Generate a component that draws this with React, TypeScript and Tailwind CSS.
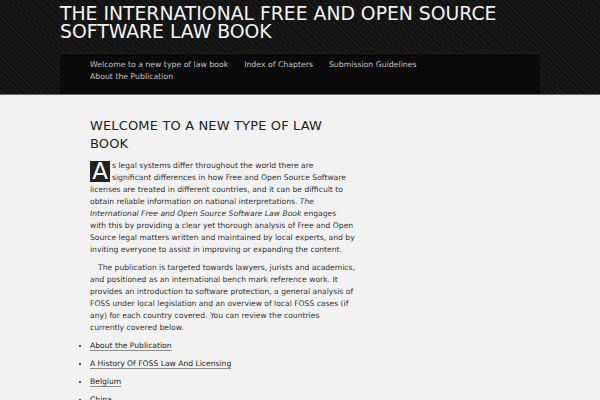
import React from "react";

export default function App() {
  const navItems = [
    "Welcome to a new type of law book",
    "Index of Chapters",
    "Submission Guidelines",
    "About the Publication",
  ];
  const links = [
    "About the Publication",
    "A History Of FOSS Law And Licensing",
    "Belgium",
    "China",
  ];
  return (
    <div className="w-[600px] h-[400px] overflow-hidden bg-[#f2f2f2] font-['DejaVu_Sans',sans-serif]">
      <header className="bg-[#141414] bg-[image:repeating-linear-gradient(45deg,#111111_0px,#111111_2px,#191919_2px,#191919_4px)] border-b border-[#6a6a6a] pt-[5px]">
        <h1 className="pl-[60px] pr-[60px] text-[18.8px] leading-[18px] text-[#f4f4f4] font-normal">
          THE INTERNATIONAL FREE AND OPEN SOURCE SOFTWARE LAW BOOK
        </h1>
        <nav className="mx-[60px] mt-[12px] bg-[#0a0a0a] border-t border-[#1f1f1f] px-[30px] pt-[5px] pb-[11px]">
          <ul className="flex flex-wrap gap-x-[16px] text-[7.75px] leading-[12px] text-[#c4c4c4]">
            {navItems.map((n) => (
              <li key={n}>{n}</li>
            ))}
          </ul>
        </nav>
      </header>
      <main className="pl-[90px]">
        <div className="w-[269.5px]">
          <h2 className="mt-[22px] text-[13px] leading-[18px] tracking-[0.15px] text-[#222222] font-normal">
            WELCOME TO A NEW TYPE OF LAW BOOK
          </h2>
          <div className="mt-[7px] text-[7.62px] leading-[12px] text-[#333333]">
            <p>
              <span className="float-left w-[20px] h-[21px] mt-[1px] mr-[2px] bg-[#222222] text-white text-[23px] leading-[21px] text-center">
                A
              </span>
              s legal systems differ throughout the world there are
              <br />
              significant differences in how Free and Open Source Software licenses are treated in different countries, and it can be difficult to obtain reliable information on national interpretations.{" "}
              <em>The International Free and Open Source Software Law Book</em> engages
              <br />
              with this by providing a clear yet thorough analysis of Free and Open Source legal matters written and maintained by local experts, and by inviting everyone to assist in improving or expanding the content.
            </p>
            <p className="mt-[6px] indent-[8px]">
              The publication is targeted towards lawyers, jurists and academics, and positioned as an international bench mark reference work. It provides an introduction to software protection, a general analysis of FOSS under local legislation and an overview of local FOSS cases (if any) for each country covered. You can review the countries
              <br />
              currently covered below.
            </p>
            <ul className="mt-[6px] list-disc list-outside">
              {links.map((l) => (
                <li key={l} className="mb-[6px] text-[#222222]">
                  <a className="border-b border-[#8a8a8a]">{l}</a>
                </li>
              ))}
            </ul>
          </div>
        </div>
      </main>
    </div>
  );
}
